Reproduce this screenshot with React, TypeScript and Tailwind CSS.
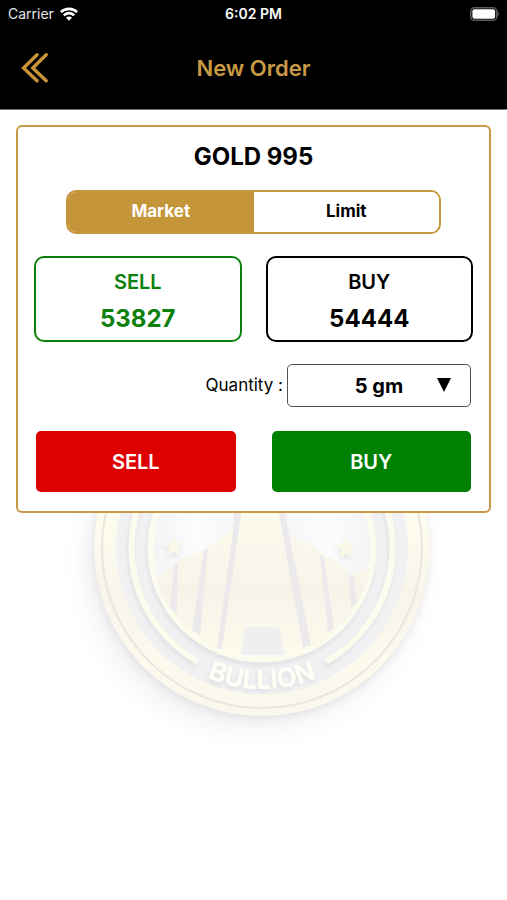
import { useState } from "react";
import clsx from "clsx";

const QUANTITIES = ["5 gm", "10 gm", "50 gm", "100 gm"];

type OrderType = "Market" | "Limit";

function StatusBar() {
  return (
    <div className="grid h-7 grid-cols-3 items-center px-2 text-white">
      <div className="flex items-center gap-[6px] text-sm text-gray-200">
        <span>Carrier</span>
        <svg viewBox="0 0 18 14" className="h-[14px] w-[18px]" fill="none" stroke="#fff" strokeWidth="2.6">
          <path d="M0.9 5.2C5.4 0.7 12.6 0.7 17.1 5.2" />
          <path d="M3.8 8.3C6.7 5.4 11.3 5.4 14.2 8.3" />
          <path d="M9 13.8L6 10.7C7.7 9.1 10.3 9.1 12 10.7Z" fill="#fff" stroke="none" />
        </svg>
      </div>
      <div className="text-center text-sm font-semibold">6:02 PM</div>
      <svg viewBox="0 0 30 14" className="h-[14px] w-[30px] justify-self-end">
        <rect x="1.75" y="0.75" width="26" height="12.5" rx="3.6" fill="none" stroke="#5c5c5c" strokeWidth="1.5" />
        <rect x="3.4" y="2.2" width="22.7" height="9.6" rx="2" fill="#fff" />
        <path d="M28.4 4.6C30.4 5.4 30.4 8.6 28.4 9.4Z" fill="#5c5c5c" />
      </svg>
    </div>
  );
}

function Header() {
  return (
    <header className="border-b border-neutral-500 bg-black">
      <StatusBar />
      <div className="grid h-[81px] grid-cols-[60px_1fr_60px] items-center">
        <button aria-label="Back" className="flex justify-start pl-5">
          <svg viewBox="0 0 30 32" className="h-8 w-[30px]" fill="none" stroke="#c89438" strokeWidth="3.4" strokeLinecap="round">
            <path d="M17 1.8L3.6 15L17 27.8" />
            <path d="M26.2 1.8L12.8 15L26.2 27.8" />
          </svg>
        </button>
        <h1 className="text-center text-[22px] font-semibold text-[#c89a45]">New Order</h1>
      </div>
    </header>
  );
}

/* Faded coin behind the card */
function Watermark() {
  return (
    <svg viewBox="0 0 507 440" className="col-start-1 row-start-1 mt-[218px] w-full" aria-hidden="true">
      <defs>
        <linearGradient id="gold" x1="0" y1="0" x2="0" y2="1">
          <stop offset="0.4" stopColor="#fdfdee" />
          <stop offset="0.64" stopColor="#f8f4ea" />
          <stop offset="0.84" stopColor="#fbfaed" />
          <stop offset="1" stopColor="#faf7ec" />
        </linearGradient>
        <linearGradient id="tower" gradientUnits="userSpaceOnUse" x1="0" y1="180" x2="0" y2="330">
          <stop offset="0" stopColor="#fcfced" />
          <stop offset="0.55" stopColor="#f7f3e9" />
          <stop offset="1" stopColor="#fcfbed" />
        </linearGradient>
        <radialGradient id="sky" gradientUnits="userSpaceOnUse" cx="262" cy="210" r="112">
          <stop offset="0" stopColor="#f3f3f6" />
          <stop offset="0.6" stopColor="#fcfcfd" />
          <stop offset="1" stopColor="#f4f4f6" />
        </radialGradient>
        <path id="legend" d="M121 220A141 141 0 0 0 403 220" />
        <clipPath id="face">
          <circle cx="262" cy="220" r="110" />
        </clipPath>
        <filter id="soft" x="-20%" y="-20%" width="140%" height="140%">
          <feGaussianBlur stdDeviation="14" />
        </filter>
        <filter id="edge" x="-20%" y="-20%" width="140%" height="140%">
          <feGaussianBlur stdDeviation="3" />
        </filter>
        <filter id="emboss" x="-10%" y="-10%" width="120%" height="120%">
          <feDropShadow dx="-1" dy="3" stdDeviation="2" floodColor="#b9b9c6" floodOpacity="0.3" />
        </filter>
      </defs>

      <circle cx="254" cy="232" r="166" fill="#ededf0" filter="url(#soft)" />
      <circle cx="261" cy="223" r="168" fill="#e4e4e7" filter="url(#edge)" />
      <circle cx="262" cy="220" r="168" fill="url(#gold)" />
      <circle cx="262" cy="220" r="160" fill="none" stroke="#e8e6e1" strokeWidth="2" />
      <circle cx="262" cy="220" r="146" fill="#f1f1f3" />

      <g filter="url(#emboss)">
        <path d="M198 333.5A130.5 130.5 0 1 1 326 333.5" fill="none" stroke="#fbfbee" strokeWidth="6" />
        <circle cx="262" cy="220" r="111" fill="none" stroke="#fbfbee" strokeWidth="7" />
      </g>
      <circle cx="262" cy="220" r="108" fill="url(#sky)" />

      <g clipPath="url(#face)">
        <path
          d="M150 256L158 250L180 232L206 221L234 201L241 185L246 130H275L280 185L288 208L310 215L322 226L336 232L352 247L374 238V340H150Z"
          fill="url(#tower)"
        />
        <g fill="#ebe9ec">
          <path d="M234 180H242L222 321H217L233 203Z" />
          <path d="M204 222L208 220L200 307L192 302Z" />
          <path d="M174 237L178 234L177 286L170 280Z" />
          <path d="M278 180H284L290 212L311 317L303 320Z" />
          <path d="M320 226L324 229L334 301L328 304Z" />
          <path d="M349 246L354 249L357 274L351 280Z" />
        </g>
        <path d="M245 299H279L285 327H241Z" fill="#efeff2" />
      </g>

      <g fill="#f9f8e8" filter="url(#emboss)">
        <path d="M174 207L177 214.500L184 215L178.500 220L180.500 228L174 223.500L167.500 228L169.500 220L163 215L171 214.500Z" />
        <path d="M346 209L349 216.500L356 217L350.500 222L352.500 230L346 225.500L339.500 230L341.500 222L335 217L343 216.500Z" />
      </g>

      <text fontSize="26" fontWeight="700" fill="#fefef6" textAnchor="middle" filter="url(#emboss)">
        <textPath href="#legend" startOffset="50%">
          BULLION
        </textPath>
      </text>
    </svg>
  );
}

interface PriceBoxProps {
  label: string;
  price: number;
  className?: string;
}

function PriceBox({ label, price, className }: PriceBoxProps) {
  return (
    <div className={clsx("rounded-[10px] border-2 pt-[6px] pb-[2px] text-center", className)}>
      <p className="text-xl leading-9 font-semibold">{label}</p>
      <p className="text-2xl leading-[38px] font-bold">{price}</p>
    </div>
  );
}

export default function App() {
  const [orderType, setOrderType] = useState<OrderType>("Market");
  const [quantity, setQuantity] = useState(QUANTITIES[0]);

  return (
    <div className="min-h-screen bg-white font-['Inter','Liberation_Sans',sans-serif] text-black">
      <Header />

      <main className="grid grid-cols-1 items-start">
        <Watermark />

        <section className="relative col-start-1 row-start-1 mx-4 mt-[15px] rounded-md border-2 border-[#c89a45] bg-white px-4 pb-[19px]">
          <h2 className="pt-3 text-center text-2xl leading-9 font-bold">GOLD 995</h2>

          {/* Order type */}
          <div className="mx-8 mt-[15px] grid h-11 grid-cols-2 overflow-hidden rounded-[10px] border-2 border-[#c59539]">
            {(["Market", "Limit"] as OrderType[]).map((type) => (
              <button
                key={type}
                onClick={() => setOrderType(type)}
                className={clsx(
                  "text-[17px] font-bold",
                  orderType === type ? "bg-[#c59539] text-white" : "bg-white text-black"
                )}
              >
                {type}
              </button>
            ))}
          </div>

          {/* Live prices */}
          <div className="mt-[22px] grid grid-cols-2 gap-6">
            <PriceBox label="SELL" price={53827} className="border-[#0b800b] text-[#0b800b]" />
            <PriceBox label="BUY" price={54444} className="border-black text-black" />
          </div>

          <div className="mt-[22px] flex items-center justify-end gap-1 pr-[2px]">
            <label htmlFor="quantity" className="text-[17px]">
              Quantity :
            </label>
            <div className="relative w-[184px]">
              <select
                id="quantity"
                value={quantity}
                onChange={(e) => setQuantity(e.target.value)}
                className="block h-[43px] w-full appearance-none rounded-[5px] border border-neutral-600 bg-white text-center text-xl font-bold [text-align-last:center]"
              >
                {QUANTITIES.map((q) => (
                  <option key={q}>{q}</option>
                ))}
              </select>
              <svg viewBox="0 0 14 14" className="pointer-events-none absolute top-[14px] right-5 size-[14px]">
                <path d="M0 0H14L7 14Z" />
              </svg>
            </div>
          </div>

          <div className="mt-6 grid grid-cols-2 gap-9 px-[2px]">
            <button className="h-[61px] rounded-[5px] bg-[#df0000] text-xl font-semibold text-white">SELL</button>
            <button className="h-[61px] rounded-[5px] bg-[#008000] text-xl font-semibold text-white">BUY</button>
          </div>
        </section>
      </main>
    </div>
  );
}
